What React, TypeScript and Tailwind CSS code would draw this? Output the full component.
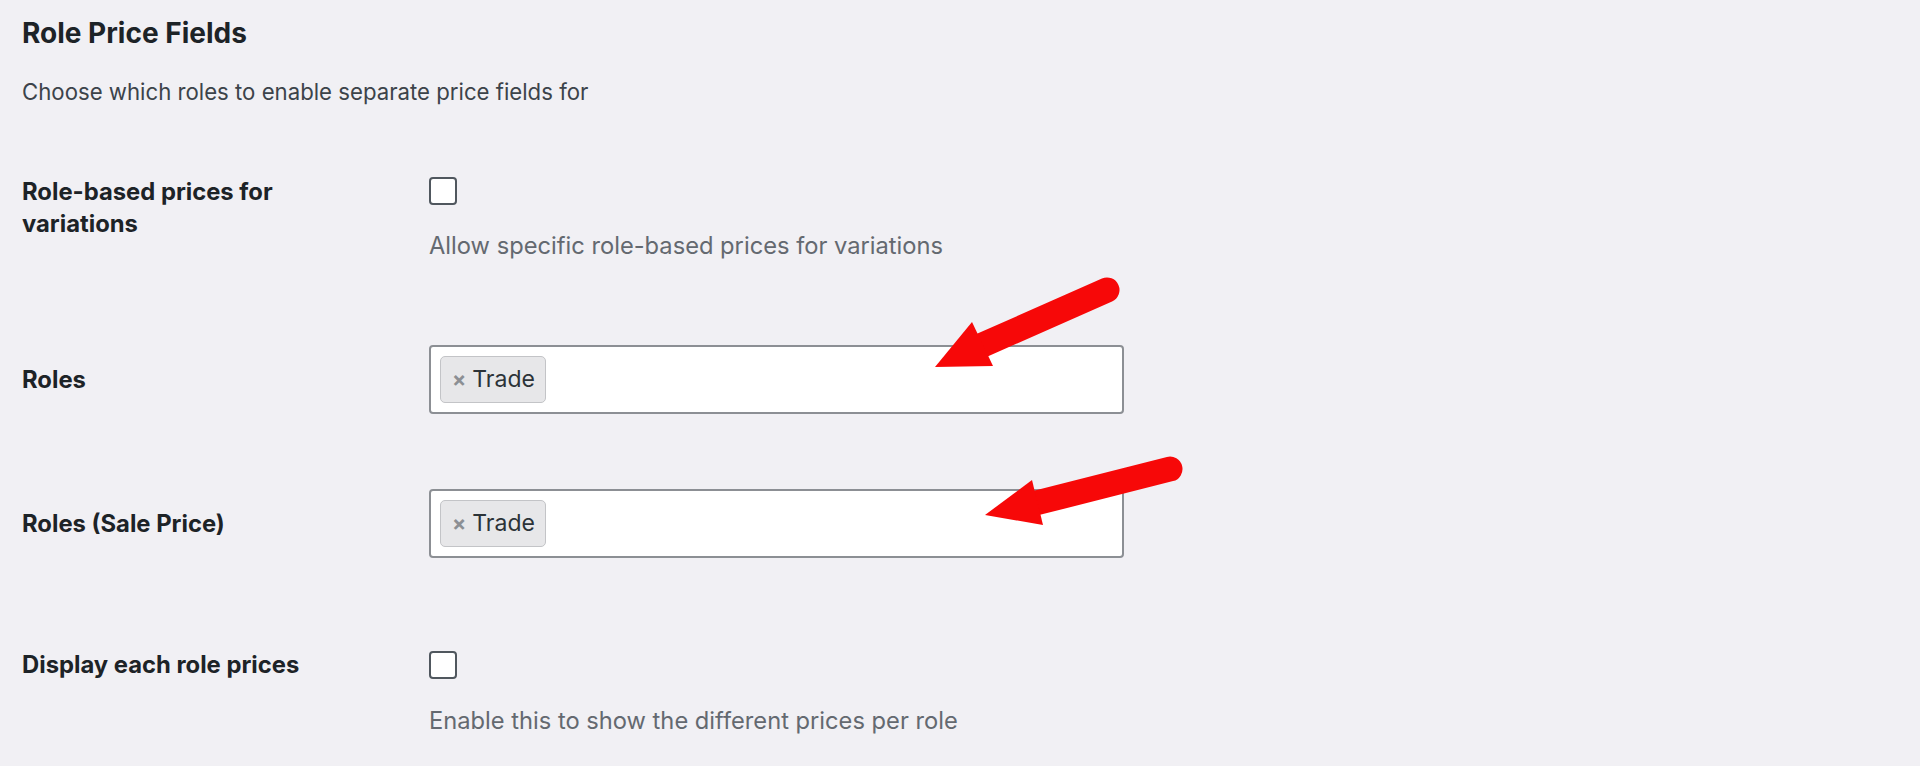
import React from 'react';

const font = { fontFamily: 'Inter, "Liberation Sans", sans-serif' };

// red annotation arrow drawn over the form
const Arrow = ({ tail, base, tip, c1, c2 }: { tail: number[]; base: number[]; tip: number[]; c1: number[]; c2: number[] }) => (
  <g>
    <line x1={tail[0]} y1={tail[1]} x2={base[0]} y2={base[1]} stroke="#f70808" strokeWidth={25} strokeLinecap="round" />
    <polygon points={`${tip[0]},${tip[1]} ${c1[0]},${c1[1]} ${c2[0]},${c2[1]}`} fill="#f70808" />
  </g>
);

const Checkbox = () => (
  <div className="w-[28px] h-[28px] rounded-[4px] border-2 border-[#50575e] bg-white" />
);

const Chip = ({ label }: { label: string }) => (
  <div className="flex items-center h-[47px] pl-[11px] pr-[10px] gap-[6px] rounded-[5px] border border-[#c3c4c7] bg-[#e7e7e9]">
    <span className="text-[21px] text-[#8c8f94] leading-none font-bold">×</span>
    <span className="text-[23px] text-[#2c3338] leading-none">{label}</span>
  </div>
);

const TagInput = ({ tags }: { tags: string[] }) => (
  <div className="flex items-center w-[695px] h-[69px] pl-[9px] border-2 border-[#8c8f94] rounded-[4px] bg-white">
    {tags.map((t) => <Chip key={t} label={t} />)}
  </div>
);

const label = 'w-[407px] text-[23.8px] leading-[32px] font-bold text-[#1d2327]';
const help = 'text-[23.7px] leading-[32px] text-[#646970]';

export default function App() {
  return (
    <div className="relative w-full h-[766px] overflow-hidden bg-[#f1f0f4] pl-[22px] pt-[17px]" style={font}>
      <h2 className="text-[28px] leading-[32px] font-bold text-[#1d2327]">Role Price Fields</h2>
      <p className="mt-[27px] text-[22.2px] leading-[32px] text-[#3c434a]">Choose which roles to enable separate price fields for</p>

      <div className="flex mt-[68px]">
        <div className={label}>Role-based prices for<br />variations</div>
        <div className="flex flex-col">
          <div className="mt-[1px]"><Checkbox /></div>
          <div className={'mt-[25px] ' + help}>Allow specific role-based prices for variations</div>
        </div>
      </div>

      <div className="flex items-center mt-[83px]">
        <div className={label}>Roles</div>
        <TagInput tags={['Trade']} />
      </div>

      <div className="flex items-center mt-[75px]">
        <div className={label}>Roles (Sale Price)</div>
        <TagInput tags={['Trade']} />
      </div>

      <div className="flex mt-[91px]">
        <div className={label}>Display each role prices</div>
        <div className="flex flex-col">
          <div className="mt-[2px]"><Checkbox /></div>
          <div className={'mt-[26px] ' + help}>Enable this to show the different prices per role</div>
        </div>
      </div>

      <svg className="absolute left-0 top-0 pointer-events-none" width={1920} height={766}>
        <Arrow tail={[1107, 290]} base={[978, 347]} tip={[935, 367]} c1={[972, 322]} c2={[993, 366]} />
        <Arrow tail={[1170, 469]} base={[1032, 504]} tip={[985, 515]} c1={[1032, 480]} c2={[1043, 525]} />
      </svg>
    </div>
  );
}
